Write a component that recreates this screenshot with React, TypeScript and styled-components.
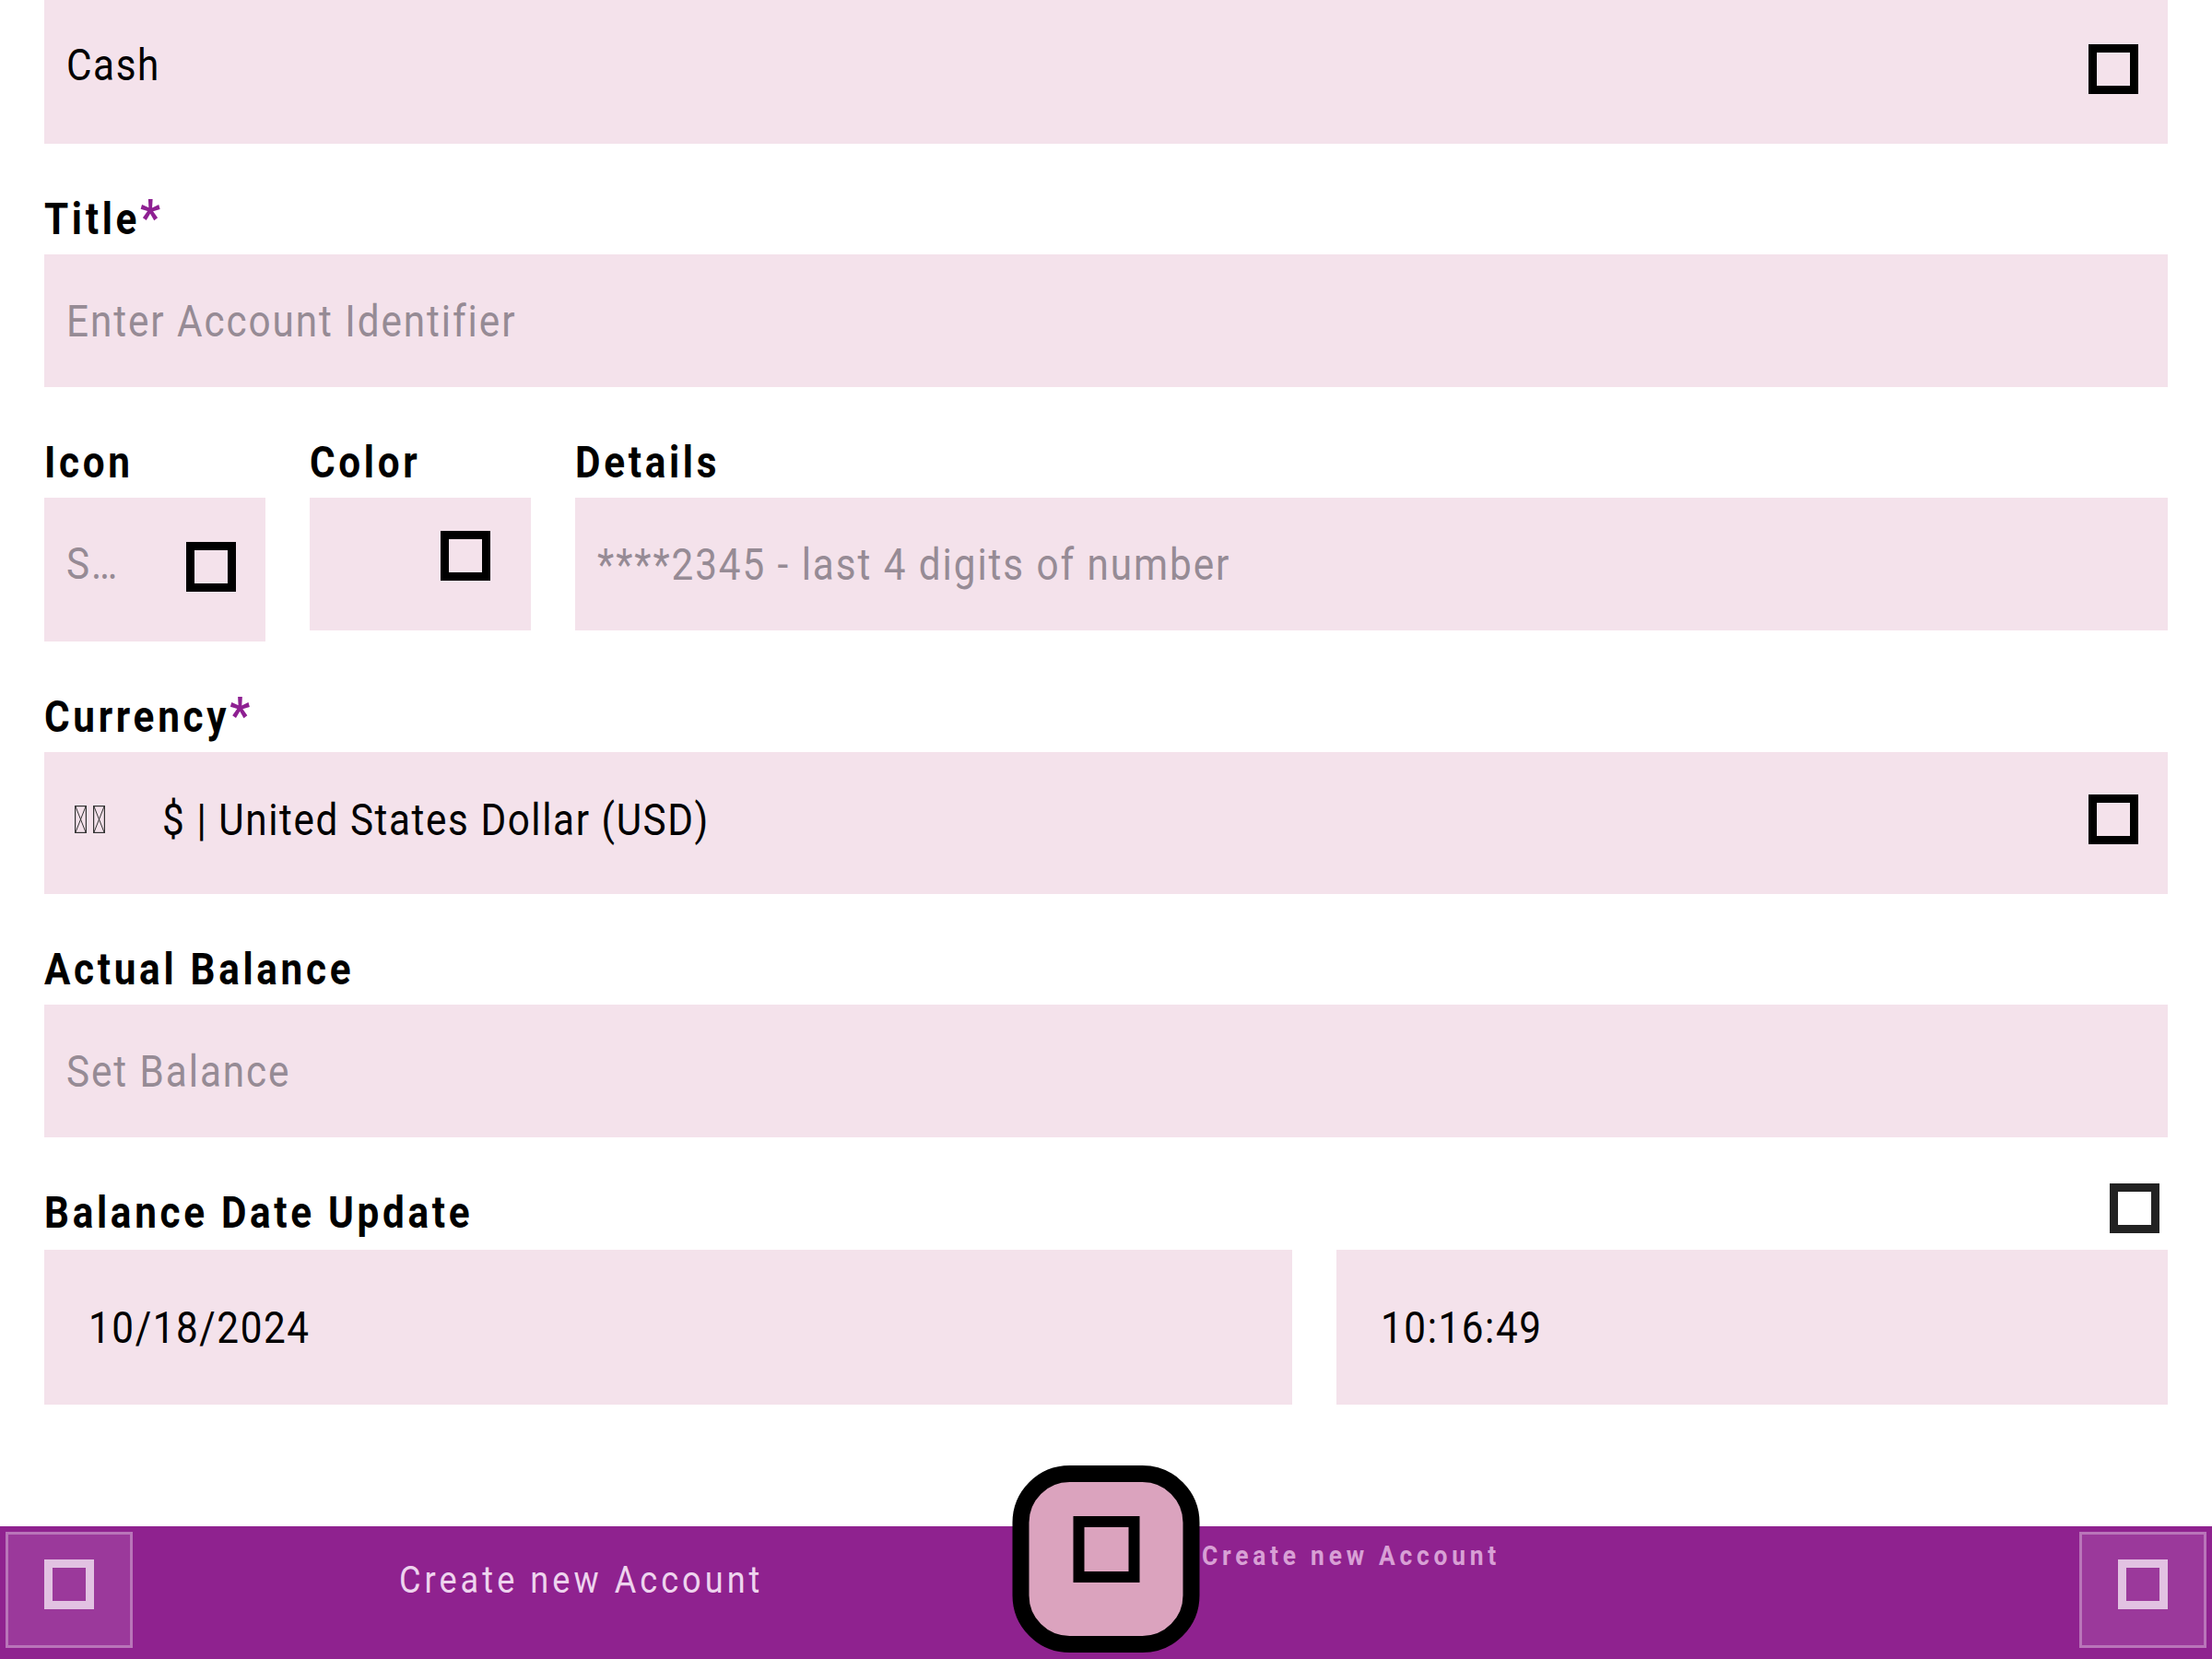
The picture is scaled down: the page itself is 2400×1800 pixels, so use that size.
import * as React from "react";
import styled, { createGlobalStyle, css } from "styled-components";

const purple = "#8f228f";
const fieldBg = "#f4e2eb";
const hint = "#968b95";

// the app's text is rendered narrow and tracked out
const squeeze = (origin = "left") => css`
  display: inline-block;
  transform: scaleX(0.88);
  transform-origin: ${origin} center;
  white-space: nowrap;
`;

const GlobalStyle = createGlobalStyle`
  html, body {
    margin: 0;
    padding: 0;
    background: #fff;
    overflow: hidden;
  }
  body {
    font-family: Roboto, "Liberation Sans", sans-serif;
    color: #000;
  }
`;

const Screen = styled.div`
  height: 100vh;
  display: flex;
  flex-direction: column;
`;

const Form = styled.div`
  flex: 1;
  min-height: 0;
  overflow: hidden;
  padding: 0 48px;
  display: flex;
  flex-direction: column;
  gap: 54px;
`;

const Section = styled.div`
  display: flex;
  flex-direction: column;
  align-items: flex-start;
  gap: 10px;
`;

const Label = styled.div`
  ${squeeze()}
  height: 56px;
  font-size: 48px;
  font-weight: 700;
  line-height: 56px;
  letter-spacing: 4.2px;
`;

const Required = styled.span`
  color: #8e2092;
  font-size: 54px;
  font-weight: 800;
  line-height: 0;
  letter-spacing: 0;
`;

const Field = styled.div<{ $height: number; $padLeft?: number; $padRight?: number; $padBottom?: number }>`
  align-self: stretch;
  height: ${p => p.$height}px;
  box-sizing: border-box;
  background: ${fieldBg};
  display: flex;
  align-items: center;
  justify-content: space-between;
  padding: 0 ${p => p.$padRight ?? 32}px ${p => p.$padBottom ?? 0}px ${p => p.$padLeft ?? 24}px;
  font-size: 48px;
  letter-spacing: 1.8px;
  overflow: hidden;
`;

const Value = styled.span`
  ${squeeze()}
  color: #000;
`;

const Placeholder = styled.span`
  ${squeeze()}
  color: ${hint};
  letter-spacing: 2.2px;
`;

const Tofu = styled.span<{ $size: number; $stroke: number; $color?: string; $lift?: number }>`
  flex: none;
  box-sizing: border-box;
  width: ${p => p.$size}px;
  height: ${p => p.$size}px;
  border: ${p => p.$stroke}px solid ${p => p.$color ?? "#000"};
  margin-bottom: ${p => (p.$lift ?? 0) * 2}px;
`;

const Row = styled.div`
  display: flex;
  align-items: flex-start;
  gap: 48px;
`;

const Cell = styled(Section)<{ $width?: number }>`
  flex: ${p => (p.$width ? `0 0 ${p.$width}px` : "1")};
  min-width: 0;
`;

const Lead = styled.div`
  display: flex;
  align-items: center;
`;

const Flags = styled.span`
  display: flex;
  gap: 7px;
  margin: 0 62px 0 9px;
`;

const Header = styled.div`
  align-self: stretch;
  display: flex;
  justify-content: space-between;
  align-items: flex-start;
  height: 56px;
  padding-right: 9px;
  margin-bottom: 2px;
`;

const DateRow = styled.div`
  align-self: stretch;
  display: flex;
  gap: 48px;
`;

const Part = styled(Field)<{ $share?: number }>`
  flex: ${p => (p.$share ? `0 0 calc((100% - 48px) * ${p.$share})` : "1")};
  min-width: 0;
  justify-content: flex-start;
`;

const BottomBar = styled.div`
  position: relative;
  flex: 0 0 144px;
  box-sizing: border-box;
  background: ${purple};
  display: flex;
  align-items: stretch;
  padding: 6px 6px 12px;
`;

const BarButton = styled.div`
  flex: 0 0 138px;
  box-sizing: border-box;
  background: #9b399b;
  border: 3px solid #b975b9;
  display: flex;
  align-items: center;
  justify-content: center;
  padding-bottom: 12px;
`;

const NavLabel = styled.div`
  flex: 0 0 974px;
  display: flex;
  justify-content: center;
  align-items: flex-start;
  padding-top: 28px;
  font-size: 41px;
  line-height: 48px;
  letter-spacing: 4.6px;
  color: #eed4ee;

  span {
    ${squeeze("center")}
  }
`;

const FabSlot = styled.div`
  flex: 0 0 186px;
`;

const SmallLabel = styled.div`
  flex: 1;
  padding-top: 8px;
  font-size: 30px;
  font-weight: 700;
  line-height: 35px;
  letter-spacing: 5.4px;
  color: #d8a0d5;

  span {
    ${squeeze()}
  }
`;

const Fab = styled.div`
  position: absolute;
  left: 50%;
  top: -66px;
  transform: translateX(-50%);
  width: 203px;
  height: 203px;
  box-sizing: border-box;
  border: 18px solid #000;
  border-radius: 62px;
  background: #dba3be;
  display: flex;
  align-items: center;
  justify-content: center;
  padding-bottom: 22px;
`;

const FlagGlyph = () => (
  <svg width="13" height="30" viewBox="0 0 13 30">
    <rect x="0.6" y="0.6" width="11.8" height="28.8" fill="none" stroke="#333" strokeWidth="1.2" />
    <path d="M1 1 L12 29 M12 1 L1 29" stroke="#333" strokeWidth="1" />
  </svg>
);

const App: React.FC = () => (
  <>
    <GlobalStyle />
    <Screen>
      <Form>
        <Field $height={156} $padBottom={16}>
          <Value>Cash</Value>
          <Tofu $size={54} $stroke={9} style={{ marginTop: 10 }} />
        </Field>

        <Section>
          <Label>
            Title<Required>*</Required>
          </Label>
          <Field $height={144}>
            <Placeholder>Enter Account Identifier</Placeholder>
          </Field>
        </Section>

        <Row>
          <Cell $width={240}>
            <Label>Icon</Label>
            <Field $height={156} $padBottom={14}>
              <Placeholder>S…</Placeholder>
              <Tofu $size={54} $stroke={9} $lift={-4} />
            </Field>
          </Cell>
          <Cell $width={240}>
            <Label>Color</Label>
            <Field $height={144} $padRight={44}>
              <span />
              <Tofu $size={54} $stroke={9} $lift={9} />
            </Field>
          </Cell>
          <Cell>
            <Label>Details</Label>
            <Field $height={144}>
              <Placeholder>****2345 - last 4 digits of number</Placeholder>
            </Field>
          </Cell>
        </Row>

        <Section>
          <Label>
            Currency<Required>*</Required>
          </Label>
          <Field $height={154} $padBottom={8}>
            <Lead>
              <Flags>
                <FlagGlyph />
                <FlagGlyph />
              </Flags>
              <Value>$ | United States Dollar (USD)</Value>
            </Lead>
            <Tofu $size={54} $stroke={9} />
          </Field>
        </Section>

        <Section>
          <Label>Actual Balance</Label>
          <Field $height={144}>
            <Placeholder>Set Balance</Placeholder>
          </Field>
        </Section>

        <Section>
          <Header>
            <Label>Balance Date Update</Label>
            <Tofu $size={54} $stroke={9} $color="#222" style={{ marginTop: -4 }} />
          </Header>
          <DateRow>
            <Part $height={168} $share={0.6} $padLeft={48} $padRight={0}>
              <Value>10/18/2024</Value>
            </Part>
            <Part $height={168} $padLeft={48} $padRight={0}>
              <Value>10:16:49</Value>
            </Part>
          </DateRow>
        </Section>
      </Form>

      <BottomBar>
        <BarButton>
          <Tofu $size={54} $stroke={9} $color="#e2c2e2" />
        </BarButton>
        <NavLabel>
          <span>Create new Account</span>
        </NavLabel>
        <FabSlot />
        <SmallLabel>
          <span>Create new Account</span>
        </SmallLabel>
        <BarButton>
          <Tofu $size={54} $stroke={9} $color="#e2c2e2" />
        </BarButton>
        <Fab>
          <Tofu $size={72} $stroke={12} />
        </Fab>
      </BottomBar>
    </Screen>
  </>
);

export default App;
